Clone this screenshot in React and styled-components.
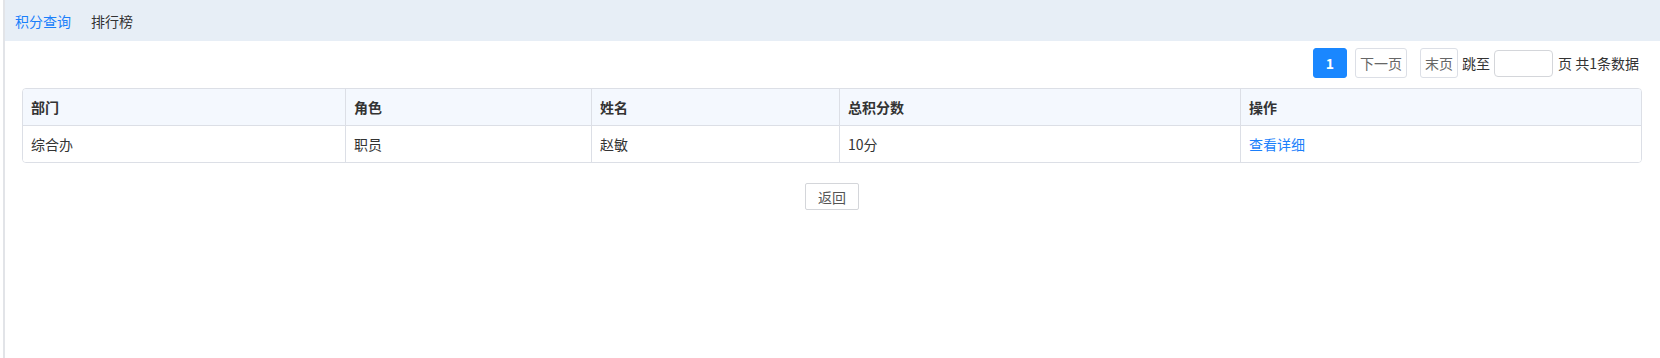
import styled, { createGlobalStyle } from "styled-components";

const GlobalStyle = createGlobalStyle`
  html, body {
    margin: 0;
    padding: 0;
    background: #fff;
    font-family: "Noto Sans CJK SC", "Microsoft YaHei", sans-serif;
    font-size: 14px;
    color: #333;
  }
`;

const Page = styled.div`
  margin-left: 3px;
  border-left: 2px solid #e2e4e8;
  height: 358px;
  box-sizing: border-box;
`;

const Tabs = styled.div`
  display: flex;
  align-items: center;
  gap: 20px;
  height: 41px;
  padding-left: 10px;
  background: #e7eef6;
`;

const Tab = styled.div`
  font-size: 14px;
  color: ${(p) => (p.$active ? "#1a7ffb" : "#333")};
  cursor: pointer;
`;

const Content = styled.div`
  padding: 7px 18px 0 17px;
`;

const Pager = styled.div`
  display: flex;
  justify-content: flex-end;
  align-items: center;
  height: 30px;
  padding-right: 3px;
  font-size: 14px;
  color: #333;
`;

const PageBtn = styled.div`
  display: flex;
  align-items: center;
  justify-content: center;
  box-sizing: border-box;
  height: 30px;
  padding: 0 ${(p) => (p.$active ? 12 : 4)}px;
  margin-left: ${(p) => p.$gap || 0}px;
  border: 1px solid ${(p) => (p.$active ? "#1a87ff" : "#dcdfe6")};
  border-radius: 3px;
  background: ${(p) => (p.$active ? "#1a87ff" : "#fff")};
  color: ${(p) => (p.$active ? "#fff" : "#666")};
  font-weight: ${(p) => (p.$active ? 700 : 400)};
`;

const PagerText = styled.span`
  margin-left: ${(p) => p.$gap || 0}px;
`;

const JumpInput = styled.input`
  box-sizing: border-box;
  width: 59px;
  height: 27px;
  margin-left: 4px;
  border: 1px solid #d4d6da;
  border-radius: 4px;
  outline: none;
`;

const Table = styled.div`
  margin-top: 10px;
  border: 1px solid #dcdfe6;
  border-radius: 4px;
  overflow: hidden;
`;

const Row = styled.div`
  display: grid;
  grid-template-columns: 322px 246px 248px 401px 1fr;
  height: 36px;
  background: ${(p) => (p.$head ? "#f4f8fe" : "#fff")};
  border-bottom: ${(p) => (p.$head ? "1px solid #dcdfe6" : "none")};
`;

const Cell = styled.div`
  display: flex;
  align-items: center;
  padding-left: 8px;
  border-left: ${(p) => (p.$first ? "none" : "1px solid #dcdfe6")};
  font-size: 14px;
  font-weight: ${(p) => (p.$head ? 700 : 400)};
  color: ${(p) => (p.$link ? "#1a7ffb" : "#333")};
`;

const Footer = styled.div`
  display: flex;
  justify-content: center;
  margin-top: 20px;
`;

const BackBtn = styled.button`
  box-sizing: border-box;
  width: 54px;
  height: 27px;
  border: 1px solid #d4d6da;
  border-radius: 2px;
  background: #fff;
  color: #555;
  font-family: inherit;
  font-size: 14px;
  padding: 0;
`;

const columns = ["部门", "角色", "姓名", "总积分数", "操作"];
const rows = [["综合办", "职员", "赵敏", "10分", "查看详细"]];

export default function App() {
  return (
    <>
      <GlobalStyle />
      <Page>
        <Tabs>
          <Tab $active>积分查询</Tab>
          <Tab>排行榜</Tab>
        </Tabs>
        <Content>
          <Pager>
            <PageBtn $active>1</PageBtn>
            <PageBtn $gap={8}>下一页</PageBtn>
            <PageBtn $gap={13}>末页</PageBtn>
            <PagerText $gap={4}>跳至</PagerText>
            <JumpInput />
            <PagerText $gap={5}>页 共1条数据</PagerText>
          </Pager>
          <Table>
            <Row $head>
              {columns.map((c, i) => (
                <Cell key={c} $head $first={i === 0}>
                  {c}
                </Cell>
              ))}
            </Row>
            {rows.map((r, ri) => (
              <Row key={ri}>
                {r.map((v, i) => (
                  <Cell key={i} $first={i === 0} $link={i === 4}>
                    {v}
                  </Cell>
                ))}
              </Row>
            ))}
          </Table>
          <Footer>
            <BackBtn>返回</BackBtn>
          </Footer>
        </Content>
      </Page>
    </>
  );
}
